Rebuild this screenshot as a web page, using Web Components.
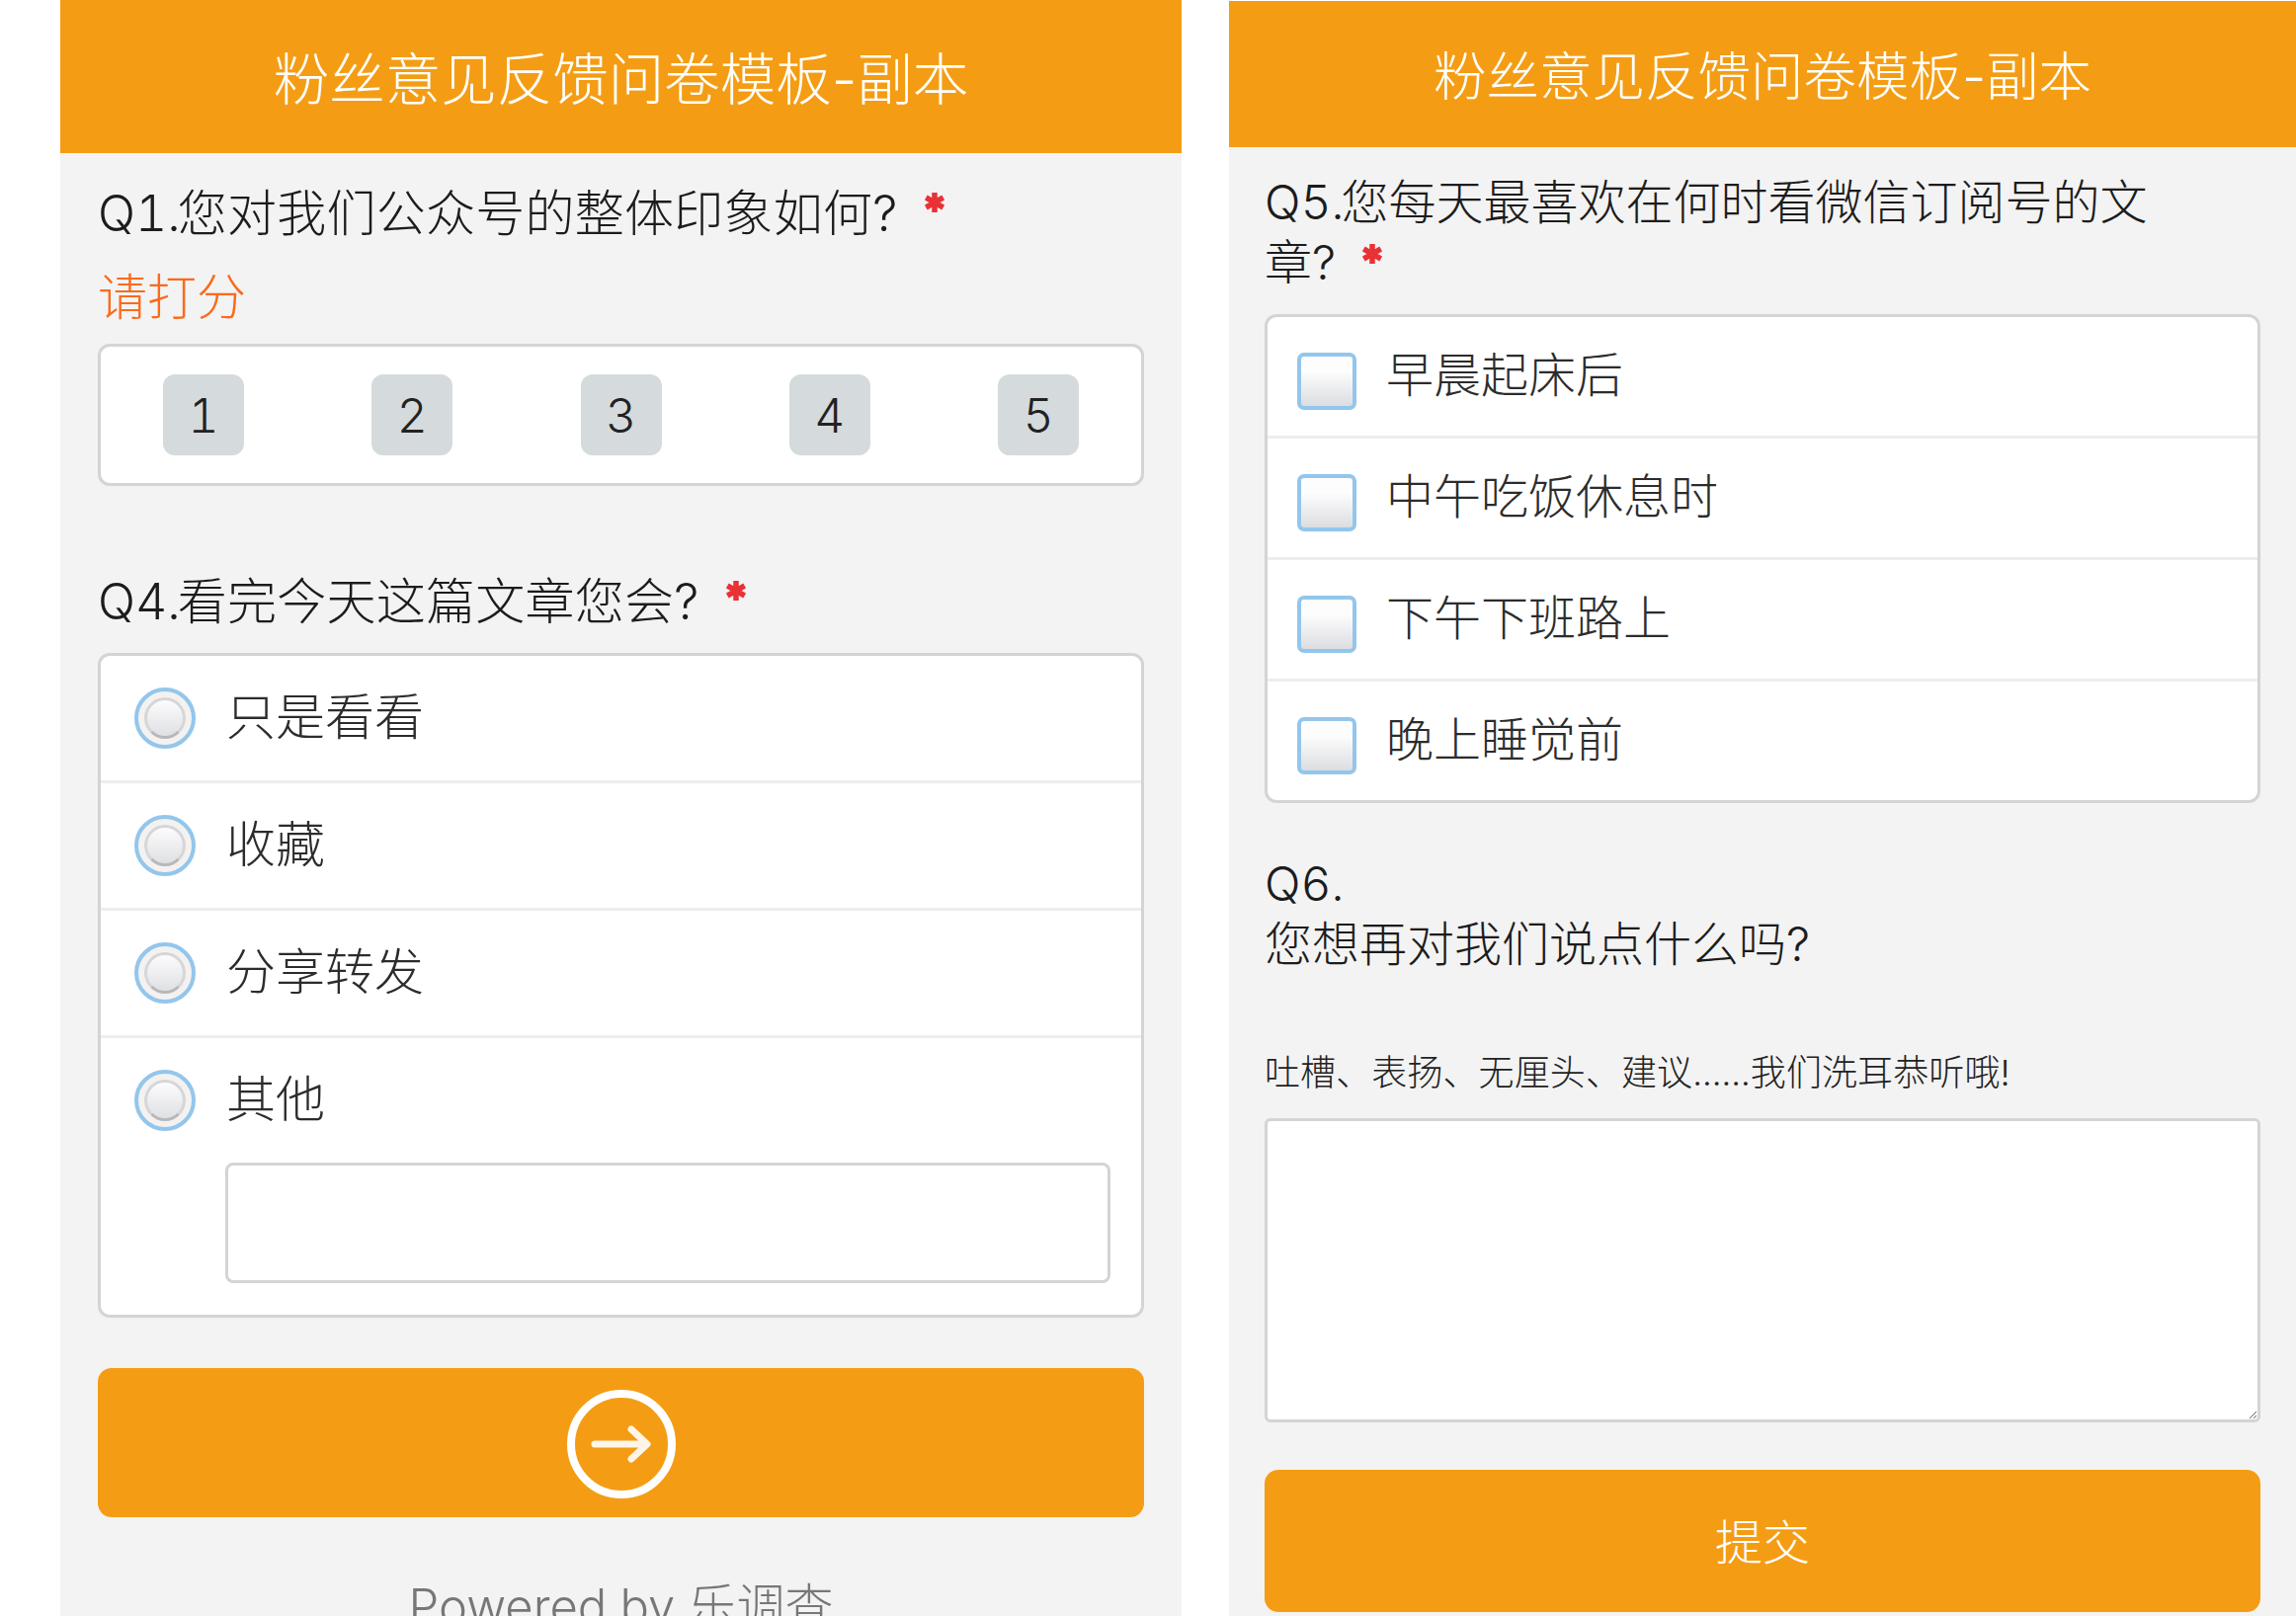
<!DOCTYPE html>
<html lang="zh-CN"><head><meta charset="utf-8"><title>粉丝意见反馈问卷模板-副本</title>
<style>
html,body{margin:0;padding:0;background:#fff}
body{width:2324px;height:1636px;overflow:hidden;display:flex;font-family:Inter,"Noto Sans CJK SC",sans-serif;font-weight:300;font-feature-settings:"tnum";color:#1c1c1c}
</style></head><body>
<survey-panel id="left" title-text="粉丝意见反馈问卷模板-副本" style="--ml:61px;--w:1135px;--mt:0px;--hh:155px;--ts:56.5px;--tb:4px;--pl:38px;--pr:38px">
  <survey-question style="--top:31px;--fs:50px;--lh:60px">Q1.<span style="margin-left:-3px;letter-spacing:.25px">您对我们公众号的整体印象如何?</span></survey-question>
  <div style="margin-top:25px;font-size:50px;line-height:60px;color:#fb6a1c">请打分</div>
  <score-card style="margin-top:17px"></score-card>
  <survey-question style="--top:87px;--fs:50px;--lh:60px">Q4.<span style="margin-left:-3px;letter-spacing:.25px">看完今天这篇文章您会?</span></survey-question>
  <option-card style="margin-top:22px">
    <option-row type="radio">只是看看</option-row>
    <option-row type="radio">收藏</option-row>
    <option-row type="radio">分享转发</option-row>
    <option-row type="radio" other last>其他</option-row>
  </option-card>
  <action-button style="--top:51px;--h:151px"><arrow-icon></arrow-icon></action-button>
  <div style="margin-top:61px;font-size:49px;line-height:60px;color:#777;text-align:center">Powered by 乐调查</div>
</survey-panel>
<survey-panel id="right" title-text="粉丝意见反馈问卷模板-副本" style="--ml:48px;--w:1080px;--mt:1px;--hh:148px;--ts:53.5px;--tb:4px;--pl:36px;--pr:36px">
  <survey-question style="--top:25px;--fs:48px;--lh:61px;--au:16px">Q5.<span style="margin-left:-3px">您每天最喜欢在何时看微信订阅号的文</span><br>章?</survey-question>
  <option-card style="margin-top:22px;--rh:120px;--px:30px;--gap:30px;--ofs:48px">
    <option-row type="check">早晨起床后</option-row>
    <option-row type="check">中午吃饭休息时</option-row>
    <option-row type="check">下午下班路上</option-row>
    <option-row type="check" last>晚上睡觉前</option-row>
  </option-card>
  <div style="margin-top:51px;font-size:48px;line-height:61px">Q6.<br>您想再对我们说点什么吗?</div>
  <div style="margin-top:75px;font-size:36px;line-height:50px;color:#222;letter-spacing:.1px">吐槽、表扬、无厘头、建议......我们洗耳恭听哦!</div>
  <text-box style="margin-top:21px"></text-box>
  <action-button style="--top:48px;--h:144px"><span style="font-size:48px;color:#fff;margin-top:-4px">提交</span></action-button>
</survey-panel>
<script>
function def(name, html, init){
  customElements.define(name, class extends HTMLElement{
    constructor(){super();this.attachShadow({mode:'open'}).innerHTML=html;}
    connectedCallback(){ if(init) init(this); }
  });
}
def('survey-panel',`<style>
:host{display:block;flex:none;box-sizing:border-box;margin-left:var(--ml);margin-top:var(--mt);width:var(--w);background:#f3f3f3;height:calc(1636px - var(--mt));overflow:hidden}
header{box-sizing:border-box;height:var(--hh);padding-bottom:var(--tb);background:#f49d14;color:#fff;display:flex;align-items:center;justify-content:center;font-size:var(--ts);font-feature-settings:normal}
main{padding:0 var(--pr) 0 var(--pl)}
</style><header id="t"></header><main><slot></slot></main>`,el=>{el.shadowRoot.getElementById('t').textContent=el.getAttribute('title-text');});
def('survey-question',`<style>
:host{display:block;margin-top:var(--top);font-size:var(--fs);line-height:var(--lh)}
svg{display:inline-block;width:20px;height:20px;margin-left:27px;vertical-align:var(--au,19px);filter:blur(.4px)}
</style><slot></slot><svg viewBox="0 0 20 20" stroke="#ea3136" stroke-width="5.5" aria-label="必填"><path d="M10 0V20M1.3 5L18.7 15M1.3 15L18.7 5"/></svg>`);
def('score-card',`<style>
:host{display:flex;justify-content:space-between;box-sizing:border-box;height:144px;padding:28px 63px 0;background:#fff;border:3px solid #d4d4d4;border-radius:12px}
span{width:82px;height:82px;border-radius:12px;background:#d5dadd;display:flex;align-items:center;justify-content:center;font-size:48px;color:#222}
</style><span>1</span><span>2</span><span>3</span><span>4</span><span>5</span>`);
def('option-card',`<style>
:host{display:block;background:#fff;border:3px solid #d4d4d4;border-radius:12px}
</style><slot></slot>`);
def('option-row',`<style>
:host{display:block;border-bottom:3px solid #ededed}
:host([last]){border-bottom:0}
.line{display:flex;align-items:center;height:var(--rh,126px);padding-left:var(--px,35px);gap:var(--gap,31px);font-size:var(--ofs,50px);color:#2c2c2c}
.radio{flex:none;box-sizing:border-box;width:62px;height:62px;margin-left:-1px;border-radius:50%;border:4px solid #93c6ec;background:#f4f2f0;display:flex;align-items:center;justify-content:center;filter:blur(.5px)}
.radio i{display:block;box-sizing:border-box;width:42px;height:42px;border-radius:50%;border:3px solid #d6d6d8;border-bottom-color:#b8b8ba;background:linear-gradient(#fcfcfd,#dfe0e3)}
.check{flex:none;box-sizing:border-box;width:60px;height:58px;margin-top:10px;border-radius:7px;border:4px solid #93c6ec;background:linear-gradient(#fdfdfd 30%,#dcdde1);filter:blur(.5px)}
.other{display:none;box-sizing:border-box;height:122px;margin:0 31px 32px 126px;border:3px solid #d4d4d4;border-radius:8px;background:#fff}
:host([other]) .other{display:block}
.text{margin-top:-11px}
</style><div class="line"><span id="m"></span><span class="text"><slot></slot></span></div><div class="other"></div>`,el=>{
  const m=el.shadowRoot.getElementById('m');
  if(el.getAttribute('type')==='radio'){m.className='radio';m.innerHTML='<i></i>';}
  else{m.className='check';}
});
def('action-button',`<style>
:host{display:flex;align-items:center;justify-content:center;margin-top:var(--top);height:var(--h);background:#f49d14;border-radius:14px}
</style><slot></slot>`);
def('arrow-icon',`<style>:host{display:block;width:110px;height:110px;margin-top:3px}svg{display:block;filter:blur(.6px)}</style>
<svg width="110" height="110" viewBox="0 0 110 110" fill="none" stroke="#fff"><circle cx="55" cy="55" r="51" stroke-width="8"/><path d="M28 55H80M65 40L81 55L65 70" stroke-width="7" stroke-linecap="round" stroke-linejoin="round" opacity=".9"/></svg>`);
def('text-box',`<style>
:host{display:block;height:308px}
textarea{display:block;box-sizing:border-box;width:100%;height:100%;margin:0;padding:8px;background:#fff;border:3px solid #d4d4d4;border-radius:6px;outline:0;resize:vertical;font:inherit}
</style><textarea aria-label="您想再对我们说点什么吗?"></textarea>`);
</script>
</body></html>
